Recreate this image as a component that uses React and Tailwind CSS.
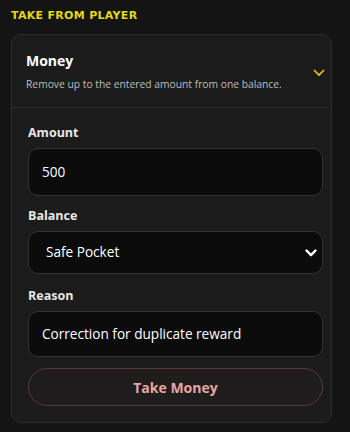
import React from 'react'

function Chevron({ className, width = 2 }) {
  return (
    <svg viewBox="0 0 12 8" className={className} fill="none" stroke="currentColor" strokeWidth={width} strokeLinecap="round" strokeLinejoin="round">
      <path d="M1.5 1.5L6 6.2l4.5-4.7" />
    </svg>
  )
}

function Label({ children }) {
  return <div className="text-[12.5px] font-bold text-[#e8e8e8] mb-[6px] leading-[18px]">{children}</div>
}

export default function App() {
  return (
    <div className="min-h-[432px] bg-[#141414] pl-[11px] pr-[18px] pt-[8px] pb-[8px]" style={{ fontFamily: '"Open Sans", "Noto Sans", sans-serif' }}>
      <h2 className="text-[11px] font-bold tracking-[0.3px] text-[#e5d90f] leading-[16px]" style={{ fontFamily: '"DejaVu Sans", Verdana, sans-serif' }}>
        TAKE FROM PLAYER
      </h2>

      <div className="mt-[10px] rounded-[10px] border border-[#2c2c2c] bg-[#1b1b1b]">
        <div className="flex items-center justify-between border-b border-[#2c2c2c] pl-[14px] pr-[6px] pt-[15px] pb-[16px]">
          <div>
            <div className="text-[14px] font-bold text-white leading-[22px]">Money</div>
            <div className="mt-[5px] text-[10.3px] text-[#bdbdbd] leading-[14px]">Remove up to the entered amount from one balance.</div>
          </div>
          <Chevron className="w-[12px] h-[8px] mt-[4px] text-[#d4c415]" width={1.8} />
        </div>

        <div className="pl-[16px] pr-[8px] pt-[16px] pb-[16px]">
          <Label>Amount</Label>
          <div className="h-[48px] rounded-[10px] border border-[#333] bg-[#0b0b0b] flex items-center px-[13px] text-[13.6px] text-white">
            500
          </div>

          <div className="mt-[11px]">
            <Label>Balance</Label>
            <div className="h-[43px] rounded-[10px] border border-[#333] bg-[#0b0b0b] flex items-center justify-between pl-[17px] pr-[5px] text-[13.6px] text-white">
              <span>Safe Pocket</span>
              <Chevron className="w-[12px] h-[8px]" width={2.4} />
            </div>
          </div>

          <div className="mt-[13px]">
            <Label>Reason</Label>
            <div className="h-[46px] rounded-[10px] border border-[#333] bg-[#0b0b0b] flex items-center px-[13px] text-[13.6px] text-white">
              Correction for duplicate reward
            </div>
          </div>

          <button className="mt-[11px] w-full h-[38px] rounded-full border border-[#5a3838] bg-[#1e1c1c] text-[14px] font-bold text-[#e9a6a0]">
            Take Money
          </button>
        </div>
      </div>
    </div>
  )
}
